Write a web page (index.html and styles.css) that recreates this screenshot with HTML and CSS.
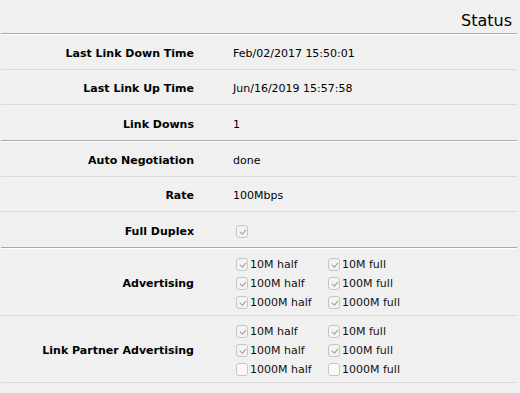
FILE: index.html
```html
<!DOCTYPE html>
<html lang="en">
<head>
  <meta charset="UTF-8" />
  <title>Port Status</title>
  <link rel="stylesheet" href="styles.css">
</head>
<body>

<div class="panel">
  <div class="panel-title">Status</div>

  <div class="section">
    <div class="row">
      <div class="label">Last Link Down Time</div>
      <div class="value">Feb/02/2017 15:50:01</div>
    </div>
    <div class="row">
      <div class="label">Last Link Up Time</div>
      <div class="value">Jun/16/2019 15:57:58</div>
    </div>
    <div class="row">
      <div class="label">Link Downs</div>
      <div class="value">1</div>
    </div>
  </div>

  <div class="section">
    <div class="row">
      <div class="label">Auto Negotiation</div>
      <div class="value">done</div>
    </div>
    <div class="row">
      <div class="label">Rate</div>
      <div class="value">100Mbps</div>
    </div>
    <div class="row">
      <div class="label">Full Duplex</div>
      <div class="value"><span class="check on"></span></div>
    </div>
  </div>

  <div class="section">
    <div class="row tall">
      <div class="label">Advertising</div>
      <div class="value">
        <div class="modes">
          <label class="mode"><span class="check on"></span>10M half</label>
          <label class="mode"><span class="check on"></span>10M full</label>
          <label class="mode"><span class="check on"></span>100M half</label>
          <label class="mode"><span class="check on"></span>100M full</label>
          <label class="mode"><span class="check on"></span>1000M half</label>
          <label class="mode"><span class="check on"></span>1000M full</label>
        </div>
      </div>
    </div>
    <div class="row tall">
      <div class="label">Link Partner Advertising</div>
      <div class="value">
        <div class="modes">
          <label class="mode"><span class="check on"></span>10M half</label>
          <label class="mode"><span class="check on"></span>10M full</label>
          <label class="mode"><span class="check on"></span>100M half</label>
          <label class="mode"><span class="check on"></span>100M full</label>
          <label class="mode"><span class="check"></span>1000M half</label>
          <label class="mode"><span class="check"></span>1000M full</label>
        </div>
      </div>
    </div>
  </div>
</div>

</body>
</html>
```

FILE: styles.css
```css
* {
  box-sizing: border-box;
}

body {
  margin: 0;
  background: #f0f0f0;
  font-family: "DejaVu Sans", Verdana, sans-serif;
  font-size: 11px;
  color: #000;
}

.panel {
  margin-left: 1px;
  width: 516px;
}

.panel-title {
  height: 33px;
  padding: 12px 5px 0 0;
  text-align: right;
  font-size: 16px;
  line-height: 18px;
}

.section {
  border-top: 1px solid #aaaaaa;
  box-shadow: inset 0 1px 0 #ffffff;
  padding-top: 1px;
}

.row {
  display: grid;
  grid-template-columns: 193px 1fr;
  column-gap: 39px;
  align-items: center;
  height: 35px;
  padding-top: 3px;
  border-bottom: 1px solid #d9d9d9;
}

.section .row:last-child {
  border-bottom: none;
}

.section:last-child .row:last-child {
  border-bottom: 1px solid #d9d9d9;
}

.row.tall {
  height: 67px;
  padding-top: 2px;
}

.label {
  text-align: right;
  font-weight: bold;
}

.value {
  display: flex;
  align-items: center;
}

.modes {
  display: grid;
  grid-template-columns: 92px auto;
  row-gap: 4px;
  padding-left: 3px;
}

.mode {
  display: flex;
  align-items: center;
  height: 15px;
  color: #111;
}

.check {
  display: inline-block;
  position: relative;
  width: 12px;
  height: 13px;
  margin-right: 2px;
  border: 1px solid #c6c6c6;
  border-radius: 3px;
  background: #fafafa;
}

.value > .check {
  margin-left: 3px;
}

.check.on {
  background: #f3f3f3;
}

.check.on::after {
  content: "";
  position: absolute;
  left: 3.5px;
  top: 2.5px;
  width: 2.5px;
  height: 5px;
  border-right: 1.2px solid #a0a0a0;
  border-bottom: 1.2px solid #a0a0a0;
  transform: rotate(40deg);
}
```
